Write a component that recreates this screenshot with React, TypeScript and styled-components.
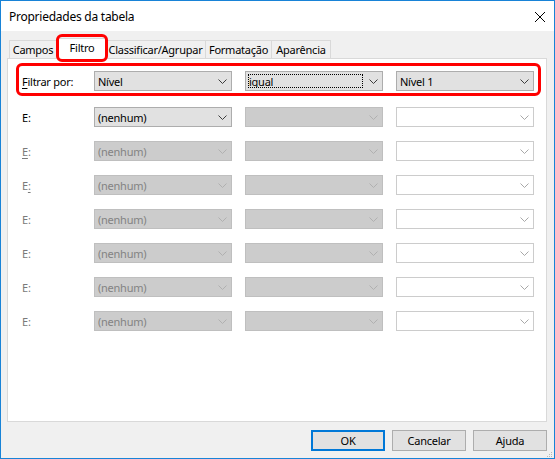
import React from "react";
import styled, { createGlobalStyle, css } from "styled-components";

const GlobalStyle = createGlobalStyle`
  html, body {
    margin: 0;
    padding: 0;
    background: #ffffff;
  }
  body {
    font-family: "Noto Sans", "Segoe UI", Arial, sans-serif;
    font-size: 11px;
    letter-spacing: -0.25px;
    color: #000000;
  }
  * {
    box-sizing: border-box;
  }
`;

const Window = styled.div`
  width: 555px;
  height: 459px;
  border: 1px solid #1883d7;
  display: flex;
  flex-direction: column;
  background: #f0f0f0;
`;

const TitleBar = styled.div`
  height: 30px;
  flex-shrink: 0;
  background: #ffffff;
  display: flex;
  align-items: center;
  justify-content: space-between;
  padding: 0 9px 0 8px;
  font-size: 12px;
`;

const CloseGlyph = styled.svg`
  width: 10px;
  height: 10px;
  margin-top: 1px;
`;

const Body = styled.div`
  flex: 1;
  display: flex;
  flex-direction: column;
  padding: 0 7px 0 6px;
`;

const TabStrip = styled.div`
  height: 27px;
  display: flex;
  align-items: flex-end;
  padding-left: 2px;
`;

const highlight = css`
  &::after {
    content: "";
    position: absolute;
    border: 3px solid #ff0000;
    border-radius: 6px;
    pointer-events: none;
  }
`;

const Tab = styled.div<{ $w: number; $active?: boolean; $marked?: boolean }>`
  position: relative;
  width: ${(p) => p.$w}px;
  height: 18px;
  border: 1px solid #d9d9d9;
  border-bottom: none;
  background: #f0f0f0;
  display: flex;
  align-items: center;
  justify-content: center;
  padding-bottom: 1px;
  & + & {
    margin-left: -1px;
  }
  ${(p) =>
    p.$active &&
    css`
      width: ${p.$w + 4}px;
      height: 21px;
      margin: 0 -2px -1px -2px;
      background: #ffffff;
      z-index: 2;
      padding-bottom: 3px;
      & + & {
        margin-left: -2px;
      }
    `}
  ${(p) =>
    p.$marked &&
    css`
      ${highlight}
      &::after {
        top: -5px;
        left: -1px;
        right: -1px;
        bottom: -3px;
      }
    `}
`;

const Panel = styled.div`
  height: 364px;
  background: #ffffff;
  border: 1px solid #d9d9d9;
  padding: 12px 0 0 14px;
  display: flex;
  flex-direction: column;
  gap: 14px;
  position: relative;
  z-index: 1;
`;

const Row = styled.div<{ $marked?: boolean }>`
  position: relative;
  display: grid;
  grid-template-columns: 59px 138px 138px 138px;
  column-gap: 13px;
  align-items: center;
  width: 512px;
  height: 20px;
  ${(p) =>
    p.$marked &&
    css`
      margin-bottom: 2px;
      ${highlight}
      &::after {
        top: -8px;
        left: -6px;
        right: -7px;
        bottom: -5px;
      }
    `}
`;

const Label = styled.span<{ $disabled?: boolean }>`
  color: ${(p) => (p.$disabled ? "#7a7a7a" : "#000000")};
  white-space: nowrap;
  u {
    text-decoration-thickness: 1px;
    text-underline-offset: 2px;
  }
`;

type ComboKind = "normal" | "focused" | "disabled" | "blank";

const comboColors: Record<ComboKind, { bg: string; border: string; text: string; arrow: string }> = {
  normal: { bg: "#e1e1e1", border: "#adadad", text: "#000000", arrow: "#3c3c3c" },
  focused: { bg: "#e1e1e1", border: "#adadad", text: "#000000", arrow: "#3c3c3c" },
  disabled: { bg: "#cccccc", border: "#bfbfbf", text: "#838383", arrow: "#b0b0b0" },
  blank: { bg: "#ffffff", border: "#cccccc", text: "#838383", arrow: "#a8a8a8" },
};

const ComboBox = styled.div<{ $kind: ComboKind }>`
  height: 20px;
  border: 1px solid ${(p) => comboColors[p.$kind].border};
  background: ${(p) => comboColors[p.$kind].bg};
  color: ${(p) => comboColors[p.$kind].text};
  display: flex;
  align-items: stretch;
`;

const ComboValue = styled.div<{ $focused?: boolean }>`
  flex: 1;
  display: flex;
  align-items: center;
  padding-left: 3px;
  white-space: nowrap;
  overflow: hidden;
  ${(p) =>
    p.$focused &&
    css`
      margin: 2px 1px 2px 2px;
      padding-left: 0;
      border: 1px dotted #000000;
    `}
`;

const ArrowBox = styled.div`
  width: 18px;
  display: flex;
  align-items: center;
  justify-content: center;
  padding-top: 1px;
`;

const Footer = styled.div`
  flex: 1;
  display: flex;
  justify-content: flex-end;
  align-items: flex-start;
  gap: 7px;
  padding-top: 8px;
  position: relative;
`;

const Button = styled.button<{ $default?: boolean }>`
  width: 74px;
  height: 21px;
  font-family: inherit;
  font-size: 11px;
  letter-spacing: -0.25px;
  color: #000000;
  background: #e1e1e1;
  border: ${(p) => (p.$default ? "2px solid #0078d7" : "1px solid #adadad")};
  padding: 0 0 1px 0;
`;

const Grip = styled.svg`
  position: absolute;
  right: -6px;
  bottom: 0;
  width: 6px;
  height: 6px;
`;

const Chevron: React.FC<{ color: string }> = ({ color }) => (
  <svg width="9" height="5" viewBox="0 0 9 5">
    <path d="M0.5 0.5 L4.5 4.5 L8.5 0.5" fill="none" stroke={color} strokeWidth="1" />
  </svg>
);

const Combo: React.FC<{ kind: ComboKind; value?: string }> = ({ kind, value }) => (
  <ComboBox $kind={kind}>
    <ComboValue $focused={kind === "focused"}>{value}</ComboValue>
    <ArrowBox>
      <Chevron color={comboColors[kind].arrow} />
    </ArrowBox>
  </ComboBox>
);

const tabs = [
  { name: "Campos", w: 48 },
  { name: "Filtro", w: 48, active: true },
  { name: "Classificar/Agrupar", w: 101 },
  { name: "Formatação", w: 67 },
  { name: "Aparência", w: 60 },
];

// rows after "Filtrar por": which part of the label carries the access-key underline
const extraRows: { enabled: boolean; key?: "E" | ":" }[] = [
  { enabled: true },
  { enabled: false, key: "E" },
  { enabled: false, key: ":" },
  { enabled: false },
  { enabled: false },
  { enabled: false },
  { enabled: false },
];

const App: React.FC = () => {
  return (
    <>
      <GlobalStyle />
      <Window>
        <TitleBar>
          <span>Propriedades da tabela</span>
          <CloseGlyph viewBox="0 0 10 10">
            <path d="M0 0 L10 10 M10 0 L0 10" stroke="#000000" strokeWidth="1" />
          </CloseGlyph>
        </TitleBar>
        <Body>
          <TabStrip>
            {tabs.map((t) => (
              <Tab key={t.name} $w={t.w} $active={t.active} $marked={t.active}>
                {t.name}
              </Tab>
            ))}
          </TabStrip>
          <Panel>
            <Row $marked>
              <Label>
                <u>F</u>iltrar por:
              </Label>
              <Combo kind="normal" value="Nível" />
              <Combo kind="focused" value="igual" />
              <Combo kind="normal" value="Nível 1" />
            </Row>
            {extraRows.map((r, i) => (
              <Row key={i}>
                <Label $disabled={!r.enabled}>
                  {r.key === "E" ? <u>E</u> : "E"}
                  {r.key === ":" ? <u>:</u> : ":"}
                </Label>
                <Combo kind={r.enabled ? "normal" : "disabled"} value="(nenhum)" />
                <Combo kind="disabled" />
                <Combo kind="blank" />
              </Row>
            ))}
          </Panel>
          <Footer>
            <Button $default>OK</Button>
            <Button>Cancelar</Button>
            <Button>Ajuda</Button>
            <Grip viewBox="0 0 6 6">
              <rect x="4" y="0" width="1" height="1" fill="#b8b8b8" />
              <rect x="2" y="2" width="1" height="1" fill="#b8b8b8" />
              <rect x="4" y="2" width="1" height="1" fill="#b8b8b8" />
              <rect x="0" y="4" width="1" height="1" fill="#b8b8b8" />
              <rect x="2" y="4" width="1" height="1" fill="#b8b8b8" />
              <rect x="4" y="4" width="1" height="1" fill="#b8b8b8" />
            </Grip>
          </Footer>
        </Body>
      </Window>
    </>
  );
};

export default App;
